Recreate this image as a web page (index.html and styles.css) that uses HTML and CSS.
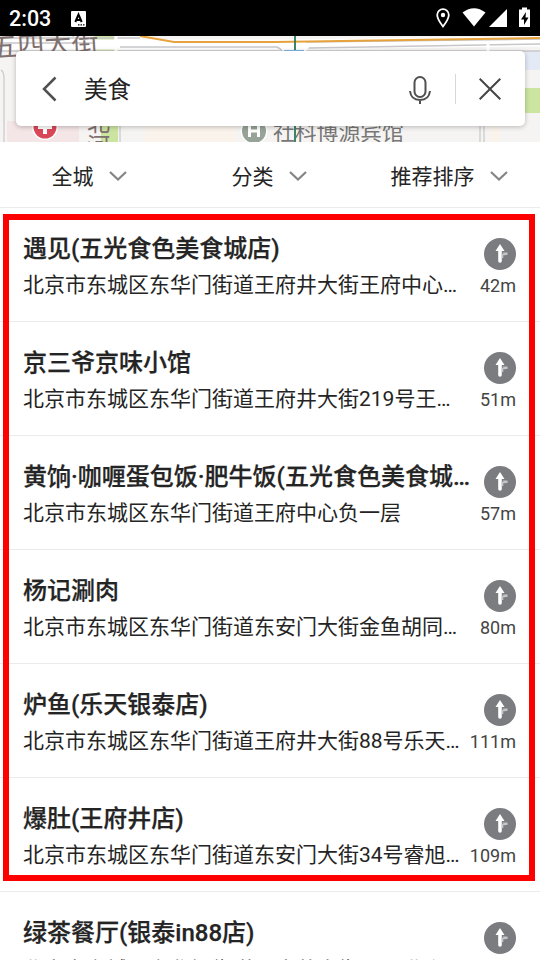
FILE: index.html
```html
<!DOCTYPE html>
<html lang="zh-CN">
<head>
<meta charset="utf-8">
<title>美食</title>
<link rel="stylesheet" href="styles.css">
</head>
<body>
<svg class="defs" aria-hidden="true">
  <symbol id="chevron" viewBox="0 0 18 10"><path d="M1 1l8 7.500L17 1" fill="none" stroke="#858585" stroke-width="2.200"/></symbol>
  <symbol id="route" viewBox="0 0 32 32"><circle cx="16" cy="16" r="16" fill="#7b7c80"/><path d="M16 23V11" stroke="#fff" stroke-width="3.600" stroke-linecap="round"/><path d="M11.500 13L16 6l4.500 7z" fill="#fff"/><path d="M18.500 20v-3.500h3" fill="none" stroke="#c4c5c7" stroke-width="1.600"/><path d="M18.500 14.500h5v2.500h-3z" fill="#c4c5c7"/></symbol>
</svg>
<div class="screen">
  <header class="status">
    <span class="time">2:03</span>
    <svg class="badge" viewBox="0 0 15 16"><rect width="15" height="16" rx="1" fill="#fff"/><path d="M4.300 11L7.500 3.500l3.200 7.500M5.500 9h4" fill="none" stroke="#000" stroke-width="2"/><path d="M7 13.800h1.500M9.500 13.800h1.500M12 13.800h1.500" stroke="#000" stroke-width="1.200"/></svg>
    <svg class="signals" viewBox="0 0 96 24"><path d="M8 3.200a5.800 5.800 0 0 0-5.800 5.800c0 4 5.800 11.500 5.800 11.500S13.800 13 13.800 9A5.800 5.800 0 0 0 8 3.200z" fill="none" stroke="#fff" stroke-width="1.800"/><circle cx="8" cy="9" r="2.200" fill="#fff"/><path d="M27.500 6.500q11.500-8.500 23 0L39 20.500z" fill="#fff"/><path d="M54 21h18V3z" fill="#fff"/><path d="M84 3.500h3V1.500h5v2h3v17.500H84z" fill="#fff"/><path d="M91 6l-5 7.500h3V19l4.500-7.500h-3z" fill="#000"/></svg>
  </header>
  <section class="map">
    <svg class="map-art" viewBox="0 36 540 106">
      <path fill="#f5f4f2" d="M0 36h540v106H0z"/>
      <path fill="#f4e5e7" d="M7 121h72v21H7z"/><path fill="#faf3ec" d="M145 121h90v21h-90zM490 121h10v21h-10z"/>
      <path fill="#cbe5a0" d="M94 36h20v16H94zM101 121h17v21h-17zM525 88h15v25h-15z"/><path fill="#e3eaf5" d="M525 51h15v19h-15z"/>
      <path d="M0 42h275l265-3M0 47h275l265-3M116 39h26" stroke="#fff" stroke-width="5" fill="none"/>
      <path d="M0 38h140M0 43h95M120 47h157l7 4M306 42l234-3M308 48l232-4M0 51h540" stroke="#c7c7ca" stroke-width="1.500" fill="none"/>
      <path d="M140 36l34 6h100l266-4" fill="none" stroke="#e7a23b" stroke-width="2"/>
      <path d="M116 36v16M488 43v9M280 45l5 6M309 45l-5 6" stroke="#fff" stroke-width="3"/><path d="M295 36v106" stroke="#267a59" stroke-width="1.800"/><path d="M284 51h20" stroke="#80b6eb" stroke-width="2"/>
      <path d="M1 70q3 2 3 8v64M120 121v21M480 121v21M484 121v21" fill="none" stroke="#c8c8ca" stroke-width="1.200"/>
      <circle cx="45" cy="127" r="13" fill="#fff"/><circle cx="45" cy="127" r="11.500" fill="#d94858"/><path d="M38 127h14M45 121v13" stroke="#fff" stroke-width="4"/>
      <circle cx="254" cy="131" r="13.500" fill="#fff"/><circle cx="254" cy="131" r="12" fill="#96a396"/><path d="M249.500 125v12M258.500 125v12M249 131h10" stroke="#fff" stroke-width="3" fill="none"/>
      <g class="map-text" fill="#80706f"><text x="-9" y="57" font-size="27" transform="rotate(-3.500 0 56)">五四大街</text><text x="87" y="131" font-size="23">北</text><text x="87" y="154" font-size="23">河</text></g>
      <text class="map-text" x="273" y="140" font-size="21.800" fill="#777">社科博源宾馆</text>
    </svg>
    <div class="search">
      <svg class="back" viewBox="0 0 15 26"><path d="M13.500 1.500L2 13l11.500 11.500" fill="none" stroke="#505050" stroke-width="2.500"/></svg>
      <span class="query">美食</span>
      <svg class="mic" viewBox="0 0 22 28"><rect x="5.500" y="1" width="11" height="20" rx="5.500" fill="none" stroke="#505050" stroke-width="2"/><path d="M1 15q1 9 10 9t10-9M11 24v4" fill="none" stroke="#505050" stroke-width="2"/></svg>
      <i class="divider"></i>
      <svg class="close" viewBox="0 0 22 22"><path d="M.7.7l20.600 20.600M21.300.7L.7 21.300" stroke="#454545" stroke-width="2"/></svg>
    </div>
  </section>
  <nav class="filters">
    <div class="filter"><span>全城</span><svg><use href="#chevron"/></svg></div>
    <div class="filter"><span>分类</span><svg><use href="#chevron"/></svg></div>
    <div class="filter"><span>推荐排序</span><svg><use href="#chevron"/></svg></div>
  </nav>
  <main class="results">
    <article class="row"><h2>遇见(五光食色美食城店)</h2><svg class="go"><use href="#route"/></svg><p>北京市东城区东华门街道王府井大街王府中心…</p><span class="dist">42m</span></article>
    <article class="row"><h2>京三爷京味小馆</h2><svg class="go"><use href="#route"/></svg><p>北京市东城区东华门街道王府井大街219号王…</p><span class="dist">51m</span></article>
    <article class="row"><h2>黄饷·咖喱蛋包饭·肥牛饭(五光食色美食城…</h2><svg class="go"><use href="#route"/></svg><p>北京市东城区东华门街道王府中心负一层</p><span class="dist">57m</span></article>
    <article class="row"><h2>杨记涮肉</h2><svg class="go"><use href="#route"/></svg><p>北京市东城区东华门街道东安门大街金鱼胡同…</p><span class="dist">80m</span></article>
    <article class="row"><h2>炉鱼(乐天银泰店)</h2><svg class="go"><use href="#route"/></svg><p>北京市东城区东华门街道王府井大街88号乐天…</p><span class="dist">111m</span></article>
    <article class="row"><h2>爆肚(王府井店)</h2><svg class="go"><use href="#route"/></svg><p>北京市东城区东华门街道东安门大街34号睿旭…</p><span class="dist">109m</span></article>
    <article class="row last"><h2>绿茶餐厅(银泰in88店)</h2><svg class="go"><use href="#route"/></svg><p>北京市东城区东华门街道王府井大街88号业主…</p><span class="dist">111m</span></article>
  </main>
  <div class="highlight"></div>
</div>
</body>
</html>
```
FILE: styles.css
```css
* { box-sizing: border-box; }
body { margin: 0; background: #fff; font-family: Roboto, "Noto Sans CJK SC", sans-serif; color: #242424; }
.defs { display: none; }
.screen { position: relative; width: 540px; height: 960px; overflow: hidden; background: #fff; }
.status { height: 36px; background: #000; color: #fff; display: flex; align-items: center; padding: 1px 9px 0 9px; }
.time { width: 62px; font-size: 21.500px; font-weight: 500; line-height: 36px; }
.badge { width: 15px; height: 16px; }
.signals { width: 96px; height: 24px; margin-left: auto; margin-top: -1px; }
.map { position: relative; height: 106px; overflow: hidden; padding: 15px 15px 0 16px; }
.map-art { position: absolute; left: 0; top: 0; width: 540px; height: 106px; }
.map-text { font-family: "Noto Sans CJK SC", sans-serif; }
.search { position: relative; height: 75px; background: #fff; border-radius: 5px; display: flex; align-items: center; padding: 0 24px 0 26px; box-shadow: 0 1px 5px rgba(0,0,0,.25); }
.back { width: 15px; height: 26px; }
.query { margin: 2px 0 0 27px; font-size: 23.500px; line-height: 34px; flex: 1; }
.mic { width: 22px; height: 28px; margin-top: 3px; }
.divider { width: 1px; height: 30px; background: #d8d8d8; margin: 0 23px 0 24px; }
.close { width: 22px; height: 22px; }
.filters { height: 66px; border-bottom: 1px solid #ebebeb; display: grid; grid-template-columns: 180px 180px 180px; }
.filter { display: flex; align-items: center; justify-content: center; gap: 15px; font-size: 21px; padding: 1px 2px 0 0; }
.filter svg { width: 18px; height: 10px; margin-top: 1px; }
.row { height: 114px; border-bottom: 1px solid #ebebeb; padding: 23px 24px 0 23px; display: grid; grid-template-columns: 1fr auto; grid-template-rows: 37px 34px; align-items: center; white-space: nowrap; }
h2 { margin: 0; font-size: 24px; line-height: 37px; font-weight: 500; -webkit-text-stroke: .25px #242424; }
p { margin: 0; font-size: 21px; line-height: 34px; }
.go { width: 32px; height: 32px; justify-self: end; margin-top: 8px; }
.dist { font-size: 18px; color: #444; justify-self: end; }
.last p { padding-top: 1px; }
.highlight { position: absolute; left: 3px; top: 214px; width: 532px; height: 667px; border: 6px solid #f00; }
```
